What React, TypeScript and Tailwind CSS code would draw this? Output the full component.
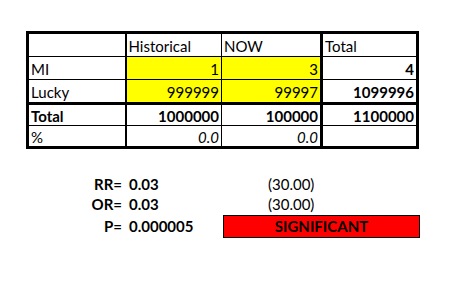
import React from 'react'

const font = { fontFamily: 'Lato, "Open Sans", sans-serif' }

const rows = [
  { label: 'MI', hist: '1', now: '3', total: '4', yellow: true },
  { label: 'Lucky', hist: '999999', now: '99997', total: '1099996', yellow: true },
]

export default function App() {
  return (
    <div className="w-[455px] h-[305px] bg-white text-black text-[15px] leading-none" style={font}>
      <div className="pt-[31px] pl-[26px]">
        <table className="border-collapse border-[3px] border-black">
          <tbody>
            {/* header */}
            <tr className="h-[24px]">
              <td className="w-[98px] border border-black border-r-2" />
              <td className="w-[96px] border border-black px-[2px] pt-[3px] align-middle">Historical</td>
              <td className="w-[100px] border border-black border-r-[3px] border-r-double px-[2px] pt-[3px]">NOW</td>
              <td className="w-[96px] border border-black px-[2px] pt-[3px]">Total</td>
            </tr>
            {rows.map((r, i) => (
              <tr key={r.label} className={i === 0 ? 'h-[23px]' : 'h-[24px]'}>
                <td className="border border-black border-r-2 px-[2px] pt-[2px]">{r.label}</td>
                <td className="border border-black bg-[#ffff00] px-[2px] pt-[2px] text-right">{r.hist}</td>
                <td className="border border-black border-r-[3px] border-r-double bg-[#ffff00] px-[2px] pt-[2px] text-right">{r.now}</td>
                <td className={`border border-black px-[2px] pt-[2px] text-right font-bold ${i === 1 ? 'border-b-[3px] border-b-double' : ''}`}>{r.total}</td>
              </tr>
            ))}
            <tr className="h-[22px]">
              <td className="border border-black border-t-[3px] border-t-double border-r-2 px-[2px] pt-[2px] font-bold">Total</td>
              <td className="border border-black border-t-[3px] border-t-double px-[2px] pt-[2px] text-right font-bold">1000000</td>
              <td className="border border-black border-t-[3px] border-t-double border-r-[3px] border-r-double px-[2px] pt-[2px] text-right font-bold">100000</td>
              <td className="border border-black border-t-[3px] border-t-double px-[2px] pt-[2px] text-right font-bold">1100000</td>
            </tr>
            <tr className="h-[22px]">
              <td className="border border-black border-r-2 px-[2px] pt-[2px]">%</td>
              <td className="border border-black px-[2px] pt-[2px] text-right italic">0.0</td>
              <td className="border border-black border-r-[3px] border-r-double px-[2px] pt-[2px] text-right italic">0.0</td>
              <td className="border border-black px-[2px]" />
            </tr>
          </tbody>
        </table>
      </div>

      {/* stats */}
      <div className="mt-[25px] ml-[26px] grid grid-cols-[96px_94px_197px] gap-x-[7px] items-center">
        <div className="h-[20px] flex items-center justify-end font-bold">RR=</div>
        <div className="h-[20px] flex items-center font-bold">0.03</div>
        <div className="h-[20px] flex items-center pl-[38px]">(30.00)</div>

        <div className="h-[21px] flex items-center justify-end font-bold">OR=</div>
        <div className="h-[21px] flex items-center font-bold">0.03</div>
        <div className="h-[21px] flex items-center pl-[38px]">(30.00)</div>

        <div className="h-[23px] flex items-center justify-end font-bold">P=</div>
        <div className="h-[23px] flex items-center font-bold">0.000005</div>
        <div className="-ml-[7px] w-[197px] h-[23px] border border-black bg-[#ff0000] flex items-center justify-center font-bold">
          SIGNIFICANT
        </div>
      </div>
    </div>
  )
}
